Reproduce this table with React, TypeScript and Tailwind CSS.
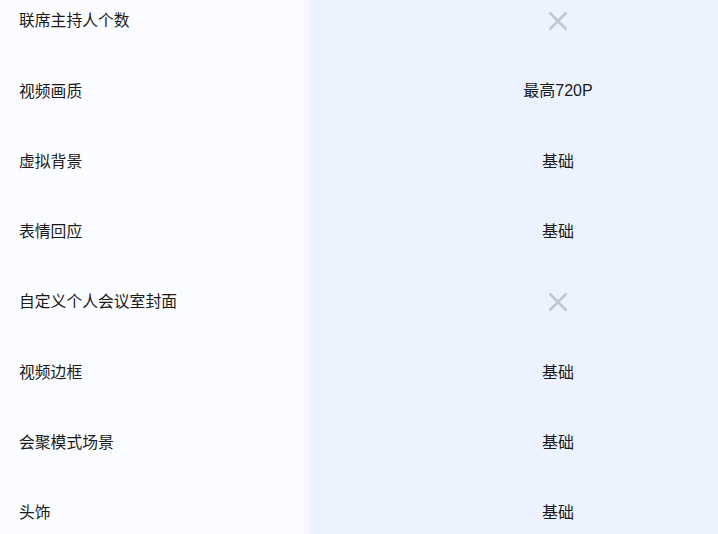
const rows: { name: string; value: string | null }[] = [
  { name: "联席主持人个数", value: null },
  { name: "视频画质", value: "最高720P" },
  { name: "虚拟背景", value: "基础" },
  { name: "表情回应", value: "基础" },
  { name: "自定义个人会议室封面", value: null },
  { name: "视频边框", value: "基础" },
  { name: "会聚模式场景", value: "基础" },
  { name: "头饰", value: "基础" },
];

function Cross() {
  return (
    <svg width="20" height="20" viewBox="0 0 20 20" fill="none">
      <path d="M1.5 1.5L18.5 18.5M18.5 1.5L1.5 18.5" stroke="#c3c6cd" strokeWidth="2.6" />
    </svg>
  );
}

export default function App() {
  return (
    <div
      className="w-[718px] h-[534px] overflow-hidden bg-[#f6f8fd] text-[#1a1a1a]"
      style={{ fontFamily: '"Liberation Sans", "Noto Sans CJK SC", sans-serif' }}
    >
      <div className="flex -mt-[14px] gap-[6px]">
        <div className="w-[304px] shrink-0 bg-[#fbfcff]">
          {rows.map((r) => (
            <div key={r.name} className="h-[70.3px] flex items-center pl-[19px] text-[15.8px]">
              {r.name}
            </div>
          ))}
        </div>
        <div className="w-[496px] shrink-0 bg-[#ecf3fe]">
          {rows.map((r) => (
            <div key={r.name} className="h-[70.3px] flex items-center justify-center text-[16px]">
              {r.value ? r.value : <Cross />}
            </div>
          ))}
        </div>
      </div>
    </div>
  );
}
